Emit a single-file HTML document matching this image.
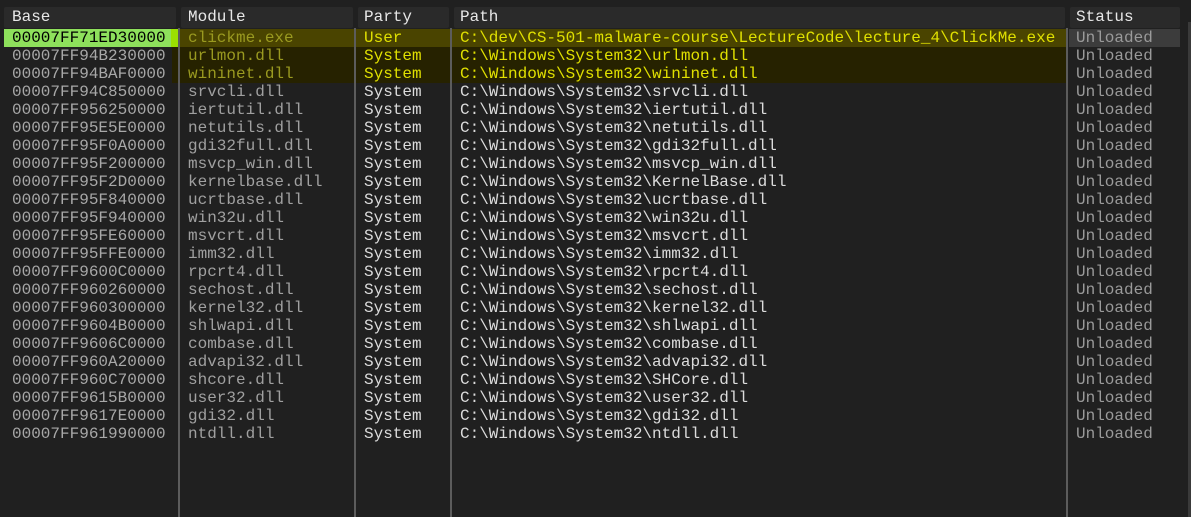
<!DOCTYPE html><html><head><style>
body{margin:0;width:1191px;height:517px;background:#202020;overflow:hidden;position:relative;font-family:"Liberation Mono",monospace;font-size:16px}
.a{position:absolute}
.h{position:absolute;top:7px;height:21px;background:#2a2a2a;color:#e8e8e8;line-height:21px;border-radius:2px}
.sep{position:absolute;top:28px;bottom:0;width:2px;background:#5c5c5c}
.r{position:absolute;left:0;width:1191px;height:18px;line-height:18px;white-space:pre}
.r span{position:absolute;top:0}
.b{left:12px;color:#a8a8a8}.m{left:188px;color:#a0a0a0}.p{left:364px;color:#dcdcdc}.t{left:460px;color:#dcdcdc}.s{left:1076px;color:#9a9a9a}
</style></head><body>
<div class="h" style="left:4px;width:172px"><span style="margin-left:8px">Base</span></div>
<div class="h" style="left:181px;width:172px"><span style="margin-left:7px">Module</span></div>
<div class="h" style="left:358px;width:91px"><span style="margin-left:6px">Party</span></div>
<div class="h" style="left:454px;width:611px"><span style="margin-left:6px">Path</span></div>
<div class="h" style="left:1070px;width:110px"><span style="margin-left:6px">Status</span></div>
<div class="a" style="left:172px;top:29px;width:895px;height:18px;background:#4a4400"></div>
<div class="a" style="left:172px;top:47px;width:895px;height:36px;background:#262200"></div>
<div class="a" style="left:4px;top:29px;width:167px;height:18px;background:#8ee05c"></div>
<div class="a" style="left:171px;top:29px;width:7px;height:18px;background:#9be000"></div>
<div class="a" style="left:1069px;top:29px;width:111px;height:18px;background:#3c3c3c"></div>
<div class="sep" style="left:178px"></div><div class="sep" style="left:354px"></div><div class="sep" style="left:450px"></div><div class="sep" style="left:1066px"></div>
<div class="a" style="left:1188px;top:22px;width:3px;height:495px;background:#3a3a3a"></div>
<div class="r" style="top:29px"><span class="b" style="color:#000">00007FF71ED30000</span><span class="m" style="color:#9a9a20">clickme.exe</span><span class="p" style="color:#e0e000">User</span><span class="t" style="color:#e0e000">C:\dev\CS-501-malware-course\LectureCode\lecture_4\ClickMe.exe</span><span class="s">Unloaded</span></div>
<div class="r" style="top:47px"><span class="b">00007FF94B230000</span><span class="m" style="color:#9a9a20">urlmon.dll</span><span class="p" style="color:#e0e000">System</span><span class="t" style="color:#e0e000">C:\Windows\System32\urlmon.dll</span><span class="s">Unloaded</span></div>
<div class="r" style="top:65px"><span class="b">00007FF94BAF0000</span><span class="m" style="color:#9a9a20">wininet.dll</span><span class="p" style="color:#e0e000">System</span><span class="t" style="color:#e0e000">C:\Windows\System32\wininet.dll</span><span class="s">Unloaded</span></div>
<div class="r" style="top:83px"><span class="b">00007FF94C850000</span><span class="m">srvcli.dll</span><span class="p">System</span><span class="t">C:\Windows\System32\srvcli.dll</span><span class="s">Unloaded</span></div>
<div class="r" style="top:101px"><span class="b">00007FF956250000</span><span class="m">iertutil.dll</span><span class="p">System</span><span class="t">C:\Windows\System32\iertutil.dll</span><span class="s">Unloaded</span></div>
<div class="r" style="top:119px"><span class="b">00007FF95E5E0000</span><span class="m">netutils.dll</span><span class="p">System</span><span class="t">C:\Windows\System32\netutils.dll</span><span class="s">Unloaded</span></div>
<div class="r" style="top:137px"><span class="b">00007FF95F0A0000</span><span class="m">gdi32full.dll</span><span class="p">System</span><span class="t">C:\Windows\System32\gdi32full.dll</span><span class="s">Unloaded</span></div>
<div class="r" style="top:155px"><span class="b">00007FF95F200000</span><span class="m">msvcp_win.dll</span><span class="p">System</span><span class="t">C:\Windows\System32\msvcp_win.dll</span><span class="s">Unloaded</span></div>
<div class="r" style="top:173px"><span class="b">00007FF95F2D0000</span><span class="m">kernelbase.dll</span><span class="p">System</span><span class="t">C:\Windows\System32\KernelBase.dll</span><span class="s">Unloaded</span></div>
<div class="r" style="top:191px"><span class="b">00007FF95F840000</span><span class="m">ucrtbase.dll</span><span class="p">System</span><span class="t">C:\Windows\System32\ucrtbase.dll</span><span class="s">Unloaded</span></div>
<div class="r" style="top:209px"><span class="b">00007FF95F940000</span><span class="m">win32u.dll</span><span class="p">System</span><span class="t">C:\Windows\System32\win32u.dll</span><span class="s">Unloaded</span></div>
<div class="r" style="top:227px"><span class="b">00007FF95FE60000</span><span class="m">msvcrt.dll</span><span class="p">System</span><span class="t">C:\Windows\System32\msvcrt.dll</span><span class="s">Unloaded</span></div>
<div class="r" style="top:245px"><span class="b">00007FF95FFE0000</span><span class="m">imm32.dll</span><span class="p">System</span><span class="t">C:\Windows\System32\imm32.dll</span><span class="s">Unloaded</span></div>
<div class="r" style="top:263px"><span class="b">00007FF9600C0000</span><span class="m">rpcrt4.dll</span><span class="p">System</span><span class="t">C:\Windows\System32\rpcrt4.dll</span><span class="s">Unloaded</span></div>
<div class="r" style="top:281px"><span class="b">00007FF960260000</span><span class="m">sechost.dll</span><span class="p">System</span><span class="t">C:\Windows\System32\sechost.dll</span><span class="s">Unloaded</span></div>
<div class="r" style="top:299px"><span class="b">00007FF960300000</span><span class="m">kernel32.dll</span><span class="p">System</span><span class="t">C:\Windows\System32\kernel32.dll</span><span class="s">Unloaded</span></div>
<div class="r" style="top:317px"><span class="b">00007FF9604B0000</span><span class="m">shlwapi.dll</span><span class="p">System</span><span class="t">C:\Windows\System32\shlwapi.dll</span><span class="s">Unloaded</span></div>
<div class="r" style="top:335px"><span class="b">00007FF9606C0000</span><span class="m">combase.dll</span><span class="p">System</span><span class="t">C:\Windows\System32\combase.dll</span><span class="s">Unloaded</span></div>
<div class="r" style="top:353px"><span class="b">00007FF960A20000</span><span class="m">advapi32.dll</span><span class="p">System</span><span class="t">C:\Windows\System32\advapi32.dll</span><span class="s">Unloaded</span></div>
<div class="r" style="top:371px"><span class="b">00007FF960C70000</span><span class="m">shcore.dll</span><span class="p">System</span><span class="t">C:\Windows\System32\SHCore.dll</span><span class="s">Unloaded</span></div>
<div class="r" style="top:389px"><span class="b">00007FF9615B0000</span><span class="m">user32.dll</span><span class="p">System</span><span class="t">C:\Windows\System32\user32.dll</span><span class="s">Unloaded</span></div>
<div class="r" style="top:407px"><span class="b">00007FF9617E0000</span><span class="m">gdi32.dll</span><span class="p">System</span><span class="t">C:\Windows\System32\gdi32.dll</span><span class="s">Unloaded</span></div>
<div class="r" style="top:425px"><span class="b">00007FF961990000</span><span class="m">ntdll.dll</span><span class="p">System</span><span class="t">C:\Windows\System32\ntdll.dll</span><span class="s">Unloaded</span></div>
</body></html>
